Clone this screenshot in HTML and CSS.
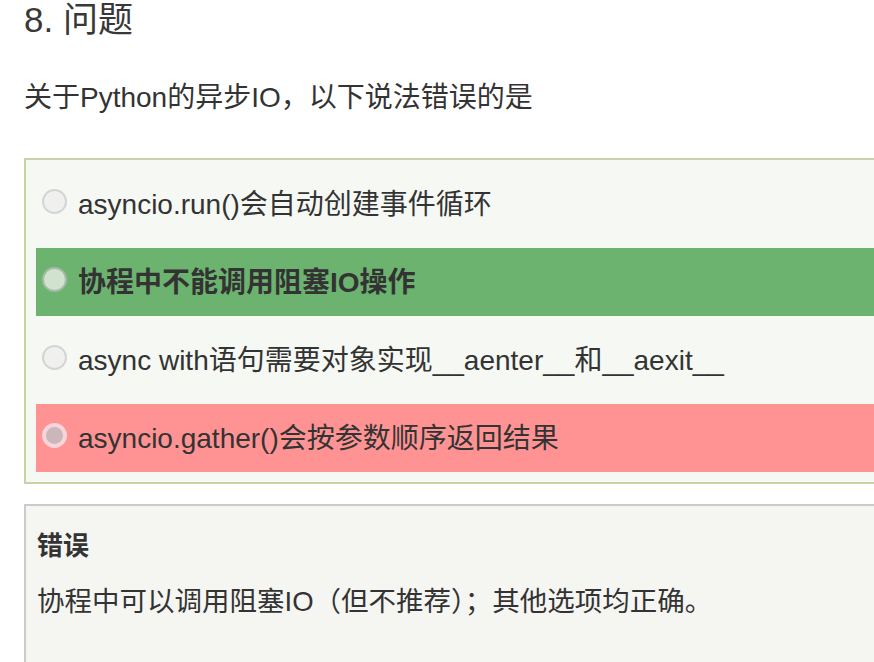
FILE: index.html
```html
<!DOCTYPE html>
<html lang="zh">
<head>
<meta charset="utf-8">
<link rel="stylesheet" href="styles.css">
</head>
<body>
<div class="page">
  <h2 class="title">8. 问题</h2>
  <p class="question">关于Python的异步IO，以下说法错误的是</p>
  <div class="options">
    <div class="option">
      <span class="radio"></span>
      <span class="label">asyncio.run()会自动创建事件循环</span>
    </div>
    <div class="option correct">
      <span class="radio"></span>
      <span class="label">协程中不能调用阻塞IO操作</span>
    </div>
    <div class="option">
      <span class="radio"></span>
      <span class="label">async with语句需要对象实现__aenter__和__aexit__</span>
    </div>
    <div class="option wrong">
      <span class="radio checked"></span>
      <span class="label">asyncio.gather()会按参数顺序返回结果</span>
    </div>
  </div>
  <div class="explain">
    <div class="explain-title">错误</div>
    <div class="explain-text">协程中可以调用阻塞IO（但不推荐）；其他选项均正确。</div>
  </div>
</div>
</body>
</html>
```
FILE: styles.css
```css
html, body {
  margin: 0;
  padding: 0;
  background: #ffffff;
  overflow: hidden;
}
body {
  font-family: "Liberation Sans", "Noto Sans CJK SC", sans-serif;
  color: #333333;
}
.page {
  padding-left: 24px;
}
.title {
  margin: 0;
  font-size: 35px;
  font-weight: normal;
  line-height: 40px;
  color: #383838;
}
.question {
  margin: 38px 0 0 0;
  font-size: 28px;
  line-height: 40px;
}
.options {
  margin-top: 40px;
  border: 2px solid #c7d3a6;
  border-right: none;
  background: #f6f8f3;
  padding: 10px 0 10px 10px;
  display: flex;
  flex-direction: column;
  gap: 10px;
}
.option {
  height: 68px;
  display: flex;
  align-items: center;
  padding-left: 6px;
  font-size: 28px;
}
.option .label {
  margin-left: 11px;
  position: relative;
  top: -2px;
}
.option.correct {
  background: #6db370;
  font-weight: bold;
}
.option.wrong {
  background: #ff9393;
}
.radio {
  width: 25px;
  height: 25px;
  box-sizing: border-box;
  border-radius: 50%;
  border: 2px solid #d4d4d4;
  background: #f0f0ef;
  flex: none;
  margin-top: -5px;
}
.correct .radio {
  background: #d1e3cf;
  border-color: #a9b9a8;
}
.radio.checked {
  border: 4px solid #f6d6d8;
  background: #cbb6ba;
}
.explain {
  margin-top: 20px;
  border: 2px solid #cbcbcb;
  border-right: none;
  background: #f5f6f2;
  padding: 20px 0 60px 11px;
}
.explain-title {
  font-size: 26px;
  font-weight: bold;
  line-height: 40px;
}
.explain-text {
  margin-top: 16px;
  font-size: 27.5px;
  line-height: 40px;
}
```
